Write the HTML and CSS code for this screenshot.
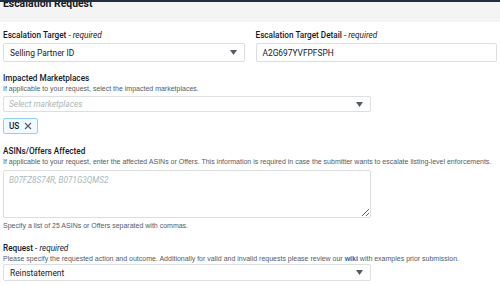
FILE: index.html
```html
<!DOCTYPE html>
<html lang="en">
<head>
    <meta charset="UTF-8">
    <meta name="viewport" content="width=device-width, initial-scale=1.0">
    <title>Escalation Request</title>
    <link rel="stylesheet" href="styles.css">
</head>
<body>
    <div class="topbar"></div>

    <header class="panel-header">
        <h2>Escalation Request</h2>
    </header>

    <form class="panel-body">
        <div class="row-2">
            <div class="field">
                <label class="label">Escalation Target <span class="req">- <i>required</i></span></label>
                <div class="select tall">
                    <span>Selling Partner ID</span>
                    <svg class="caret" width="7" height="5" viewBox="0 0 7 5"><path d="M0 0h7L3.5 5z" fill="#545b64"/></svg>
                </div>
            </div>
            <div class="field">
                <label class="label">Escalation Target Detail <span class="req">- <i>required</i></span></label>
                <div class="select tall"><span>A2G697YVFPFSPH</span></div>
            </div>
        </div>

        <div class="field block gap-impacted">
            <label class="label">Impacted Marketplaces</label>
            <p class="desc">If applicable to your request, select the impacted marketplaces.</p>
            <div class="select wide">
                <span class="placeholder">Select marketplaces</span>
                <svg class="caret" width="7" height="5" viewBox="0 0 7 5"><path d="M0 0h7L3.5 5z" fill="#545b64"/></svg>
            </div>
            <div class="tokens">
                <span class="token">US
                    <svg width="8" height="8" viewBox="0 0 8 8"><path d="M1 1l6 6M7 1L1 7" stroke="#545b64" stroke-width="1.1"/></svg>
                </span>
            </div>
        </div>

        <div class="field block gap-asins">
            <label class="label">ASINs/Offers Affected</label>
            <p class="desc">If applicable to your request, enter the affected ASINs or Offers. This information is required in case the submitter wants to escalate listing-level enforcements.</p>
            <textarea class="area" placeholder="B07FZ8S74R, B071G3QMS2"></textarea>
            <p class="hint">Specify a list of 25 ASINs or Offers separated with commas.</p>
        </div>

        <div class="field block gap-request">
            <label class="label">Request <span class="req">- <i>required</i></span></label>
            <p class="desc">Please specify the requested action and outcome. Additionally for valid and invalid requests please review our <a href="#" class="link">wiki</a> with examples prior submission.</p>
            <div class="select wide short">
                <span>Reinstatement</span>
                <svg class="caret" width="7" height="5" viewBox="0 0 7 5"><path d="M0 0h7L3.5 5z" fill="#545b64"/></svg>
            </div>
        </div>
    </form>
</body>
</html>
```

FILE: styles.css
```css
/* Formulario de escalado */
body {
    margin: 0;
    font-family: Roboto, 'Liberation Sans', sans-serif;
    color: #16191f;
    background-color: #fff;
    overflow: hidden;
}

.topbar {
    position: fixed;
    top: 0;
    left: 0;
    right: 0;
    height: 2px;
    background-color: #232f3e;
    z-index: 5;
}

.panel-header {
    height: 22px;
    background-color: #f4f4f4;
    padding: 0 3px;
    box-sizing: border-box;
}

.panel-header h2 {
    margin: 0;
    font-size: 10.4px;
    line-height: 8px;
    font-weight: 700;
}

.panel-body {
    padding: 8px 3px 0 3px;
}

.row-2 {
    display: grid;
    grid-template-columns: 1fr 1fr;
    column-gap: 11px;
}

.field {
    display: flex;
    flex-direction: column;
    align-items: flex-start;
}

.label {
    display: block;
    font-size: 8.2px;
    line-height: 10px;
    font-weight: 500;
    margin-bottom: 3px;
}

.block .label {
    margin-bottom: 0;
}

.req {
    font-weight: 400;
}

.desc, .hint {
    margin: 1px 0 0 0;
    font-family: 'Liberation Sans', Arial, sans-serif;
    font-size: 7px;
    line-height: 9px;
    color: #545b64;
    white-space: nowrap;
}

.link {
    color: #0073bb;
    font-weight: 700;
    text-decoration: none;
}

.gap-impacted { margin-top: 11px; }
.gap-asins { margin-top: 12px; }
.gap-request { margin-top: 13px; }

.select {
    display: flex;
    align-items: center;
    justify-content: space-between;
    box-sizing: border-box;
    width: 100%;
    height: 16px;
    padding: 0 7px 0 5px;
    border: 1px solid #dcdfdf;
    border-radius: 2px;
    background-color: #fff;
    font-size: 8.4px;
    color: #16191f;
}

.select.tall {
    height: 19px;
    padding-left: 6px;
}

.select.wide {
    width: 368px;
    margin-top: 3px;
}

.select.short {
    height: 17px;
    margin-top: 1px;
    padding-left: 6px;
}

.placeholder {
    color: #aab7b8;
    font-style: italic;
}

.caret {
    flex: none;
}

.tokens {
    margin-top: 6px;
}

.token {
    display: flex;
    align-items: center;
    gap: 5px;
    box-sizing: border-box;
    height: 16px;
    width: 35px;
    padding: 0 4px 0 5px;
    border: 1px solid #93d1ea;
    border-radius: 2px;
    background-color: #f1faff;
    font-size: 8.2px;
    font-weight: 500;
}

.area {
    display: block;
    box-sizing: border-box;
    width: 368px;
    height: 48px;
    margin: 4px 0 0 0;
    padding: 4px 5px;
    border: 1px solid #dcdfdf;
    border-radius: 2px;
    font-family: inherit;
    font-size: 8.2px;
    line-height: 10px;
    resize: vertical;
}

.area::placeholder {
    color: #aab7b8;
    font-style: italic;
}

.hint {
    margin-top: 3px;
}
```
